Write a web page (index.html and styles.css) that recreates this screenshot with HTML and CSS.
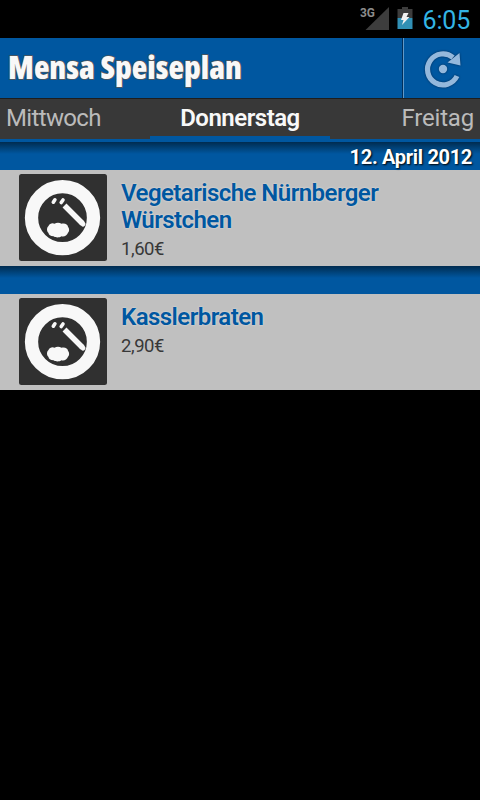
FILE: index.html
```html
<!DOCTYPE html>
<html lang="de">
<head>
<meta charset="utf-8">
<title>Mensa Speiseplan</title>
<link rel="stylesheet" href="styles.css">
</head>
<body>
<div class="status">
  <svg class="signal" width="30" height="26" viewBox="0 0 30 26"><path d="M5.500 24L29 1V24Z" fill="#3d3d3d"/><text x="0" y="11" textLength="15" lengthAdjust="spacingAndGlyphs">3G</text></svg>
  <svg class="battery" width="16" height="24" viewBox="0 0 16 24"><path d="M5 1h6v2h4.500v9H.5V3H5z" fill="#3d3d3d"/><path d="M.5 12h15v11H.5z" fill="#3190b5"/><path d="M6.500 7h5L9.500 11h3L5 19l1.500-5H4z" fill="#f2f2f2"/></svg>
  <span class="clock">6:05</span>
</div>
<header class="bar">
  <svg class="title" width="250" height="60"><text x="8" y="41" textLength="234" lengthAdjust="spacingAndGlyphs">Mensa Speiseplan</text></svg>
  <div class="refresh">
    <svg width="42" height="42" viewBox="0 0 42 42"><g class="glyph"><path d="M35 28A15.500 15.500 0 1 1 31 9.500" fill="none" stroke="#94b8dc" stroke-width="5.200"/><path d="M37.500 5L38.500 17.500L25.500 14.500z" fill="#94b8dc"/><circle cx="21" cy="21" r="4.200" fill="#94b8dc"/></g></svg>
  </div>
</header>
<nav class="tabs">
  <span class="tab left">Mittwoch</span>
  <span class="tab active">Donnerstag</span>
  <span class="tab right">Freitag</span>
</nav>
<main>
  <div class="section date">12. April 2012</div>
  <article class="meal">
    <svg class="plate" width="88" height="87" viewBox="0 0 88 87"><rect width="88" height="87" rx="2.500" fill="#303030"/><circle cx="43.500" cy="43.700" r="31" fill="none" stroke="#f8f8f8" stroke-width="13.300"/><path d="M45.500 31.500L63.500 49.500" stroke="#f8f8f8" stroke-width="5.500"/><path d="M62.500 48.500l1.500 1.500" stroke="#f8f8f8" stroke-width="5" stroke-linecap="round"/><path d="M34.300 28.200l1.600-2.400M42.200 28.500l1.800-2.500" stroke="#f8f8f8" stroke-width="3.600" stroke-linecap="round"/><path d="M29.500 52c1-2.500 4-3.500 6-2.300 2-1.200 5-1.200 7 0 3-1 6.500.5 6.500 3 1.500 2 1.500 4.500 0 6-1 3-4 4.300-6.500 3.500-2 1.600-6 1.600-8 0-3 0-5-1.200-5-3.200-2-1.500-2-5.500 0-7z" fill="#f8f8f8"/></svg>
    <div class="info"><h2>Vegetarische Nürnberger<br>Würstchen</h2><p>1,60€</p></div>
  </article>
  <div class="section"></div>
  <article class="meal">
    <svg class="plate" width="88" height="87" viewBox="0 0 88 87"><rect width="88" height="87" rx="2.500" fill="#303030"/><circle cx="43.500" cy="43.700" r="31" fill="none" stroke="#f8f8f8" stroke-width="13.300"/><path d="M45.500 31.500L63.500 49.500" stroke="#f8f8f8" stroke-width="5.500"/><path d="M62.500 48.500l1.500 1.500" stroke="#f8f8f8" stroke-width="5" stroke-linecap="round"/><path d="M34.300 28.200l1.600-2.400M42.200 28.500l1.800-2.500" stroke="#f8f8f8" stroke-width="3.600" stroke-linecap="round"/><path d="M29.500 52c1-2.500 4-3.500 6-2.300 2-1.200 5-1.200 7 0 3-1 6.500.5 6.500 3 1.500 2 1.500 4.500 0 6-1 3-4 4.300-6.500 3.500-2 1.600-6 1.600-8 0-3 0-5-1.200-5-3.200-2-1.500-2-5.500 0-7z" fill="#f8f8f8"/></svg>
    <div class="info"><h2>Kasslerbraten</h2><p>2,90€</p></div>
  </article>
</main>
</body>
</html>
```
FILE: styles.css
```css
* { box-sizing: border-box; }
body { margin: 0; background: #000; font-family: Roboto, sans-serif; }
svg { display: block; }
.status { height: 38px; display: flex; justify-content: flex-end; padding: 6px 10px 0 0; }
.signal { margin-right: 7px; }
.signal text { font: bold 12.500px Roboto, sans-serif; fill: #8c8c8c; }
.battery { margin-right: 10px; }
.clock { font-size: 25px; line-height: 29px; letter-spacing: -.2px; color: #33b5e5; }
.bar { height: 60px; background: #0057a0; display: flex; justify-content: space-between; }
.title text { font: 800 32px "Open Sans", sans-serif; font-stretch: 75%; fill: #f8f8f8; stroke: #555; stroke-width: 1.500px; paint-order: stroke; }
.refresh { width: 78px; border-left: 1px solid #002f5c; box-shadow: inset 1px 0 #6299c7; padding: 10px 0 0 19px; }
.glyph { filter: drop-shadow(0 0 1px #002b55); }
.tabs { height: 44px; display: flex; justify-content: space-between; background: linear-gradient(#1e1e1e 1px, #383838 1px 41px, #0057a0 41px); color: #bbb; font-size: 24px; line-height: 40px; }
.tab { width: 150px; padding: 0 6px; }
.left { letter-spacing: -.65px; }
.right { text-align: right; letter-spacing: -.2px; }
.active { width: 180px; text-align: center; font-weight: 600; letter-spacing: -.5px; color: #f8f8f8; background: linear-gradient(transparent 38px, #0057a0 38px); }
.section { height: 28px; background: linear-gradient(#002c50, #0057a0 12px); }
.date { color: #fff; font-size: 20px; font-weight: 700; line-height: 30px; letter-spacing: -.32px; text-align: right; padding-right: 8px; text-shadow: 1px 1px 2px #000; }
.meal { height: 96px; background: #c0c0c0; display: flex; padding: 4px 0 0 19px; }
.info { margin-left: 14px; padding-top: 6px; }
h2 { margin: 0; font-size: 24px; font-weight: 600; line-height: 27px; letter-spacing: -.55px; color: #0057a0; text-shadow: 0 0 2px #e8e8e8; }
p { margin: 4px 0 0; font-size: 18.500px; line-height: 22px; letter-spacing: -.45px; color: #383838; }
```
